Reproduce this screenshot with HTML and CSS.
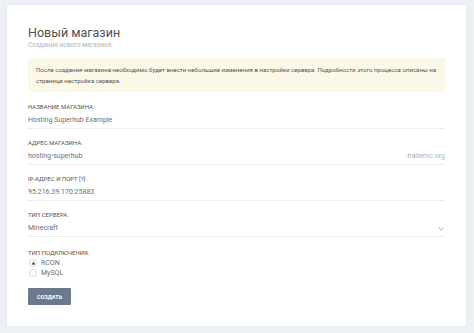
FILE: index.html
```html
<!DOCTYPE html>
<html lang="ru">
<head>
    <meta charset="UTF-8">
    <meta name="viewport" content="width=device-width, initial-scale=1.0">
    <title>Новый магазин</title>
    <link rel="stylesheet" href="styles.css">
</head>
<body>
    <div class="card">
        <h1>Новый магазин</h1>
        <div class="subtitle">Создания нового магазина</div>
        <div class="alert">
            После создания магазина необходимо будет внести небольшие изменения в настройки сервера. Подробности этого процесса описаны на странице настройка сервера.
        </div>
        <form id="shopForm">
            <div class="form-group">
                <label for="name">Название магазина:</label>
                <div class="field">
                    <input type="text" id="name" value="Hosting Superhub Example">
                </div>
            </div>
            <div class="form-group">
                <label for="address">Адрес магазина:</label>
                <div class="field">
                    <input type="text" id="address" value="hosting-superhub">
                    <span class="suffix">.trademc.org</span>
                </div>
            </div>
            <div class="form-group">
                <label for="ip">IP-адрес и порт [?]:</label>
                <div class="field">
                    <input type="text" id="ip" value="95.216.39.170:25883">
                </div>
            </div>
            <div class="form-group">
                <label for="type">Тип сервера:</label>
                <div class="field">
                    <select id="type">
                        <option>Minecraft</option>
                    </select>
                    <svg class="chevron" width="6" height="4" viewBox="0 0 6 4"><path d="M0.5 0.5 L3 3 L5.5 0.5" fill="none" stroke="#aaa" stroke-width="1"/></svg>
                </div>
            </div>
            <div class="form-group radios">
                <label>Тип подключения:</label>
                <div class="radio"><input type="radio" name="conn" id="rcon" checked><span>RCON</span></div>
                <div class="radio"><input type="radio" name="conn" id="mysql"><span>MySQL</span></div>
            </div>
            <button type="submit" class="btn">Создать</button>
        </form>
    </div>
</body>
</html>
```

FILE: styles.css
```css
body { margin: 0; background: #edf1f6; font-family: 'Roboto', 'Liberation Sans', sans-serif; color: #555; }
.card {
    background: #fff;
    margin: 4px 7px 6px 6px;
    padding: 20px 21px 22px;
    border: 1px solid #e9edf3;
    box-sizing: border-box;
    height: 323px;
}
h1 { font-size: 12.5px; font-weight: 400; line-height: 16px; margin: 0; color: #505050; }
.subtitle { font-size: 6.5px; line-height: 8px; color: #b5b5b5; }
.alert {
    background: #fbf8e7;
    margin-top: 9px;
    padding: 7px 8px 6px;
    font-size: 6.1px;
    line-height: 10.5px;
    color: #555;
}
#shopForm { margin-top: 10px; }
.form-group { margin-bottom: 9px; }
label {
    display: block;
    font-size: 6px;
    line-height: 10px;
    text-transform: uppercase;
    color: #555;
}
.field {
    position: relative;
    display: flex;
    align-items: center;
    border-bottom: 1px solid #eceef1;
    height: 16px;
}
input[type=text], select {
    flex: 1;
    border: none;
    outline: none;
    padding: 0;
    background: transparent;
    font-family: inherit;
    font-size: 7px;
    color: #707070;
    height: 16px;
    appearance: none;
    -webkit-appearance: none;
}
.suffix { font-size: 7px; color: #b0b0b0; }
.chevron { position: absolute; right: 1px; top: 7px; }
.radios { margin-top: 11px; margin-bottom: 10px; }
.radio { display: flex; align-items: center; height: 10px; font-size: 7px; color: #707070; }
.radio input {
    -webkit-appearance: none;
    appearance: none;
    width: 8px;
    height: 8px;
    margin: 0 4px 0 1px;
    border: 1px solid #d8dbe0;
    border-radius: 50%;
    box-sizing: border-box;
    position: relative;
}
.radio input:checked::after {
    content: '';
    position: absolute;
    left: 1.5px;
    top: 1.5px;
    width: 3px;
    height: 3px;
    border-radius: 50%;
    background: #666;
}
.btn {
    display: block;
    width: 43px;
    height: 17px;
    padding: 0;
    background-color: #6b788e;
    color: white;
    border: none;
    border-radius: 1px;
    font-family: inherit;
    font-size: 5.5px;
    font-weight: 700;
    text-transform: uppercase;
    cursor: pointer;
}
```
